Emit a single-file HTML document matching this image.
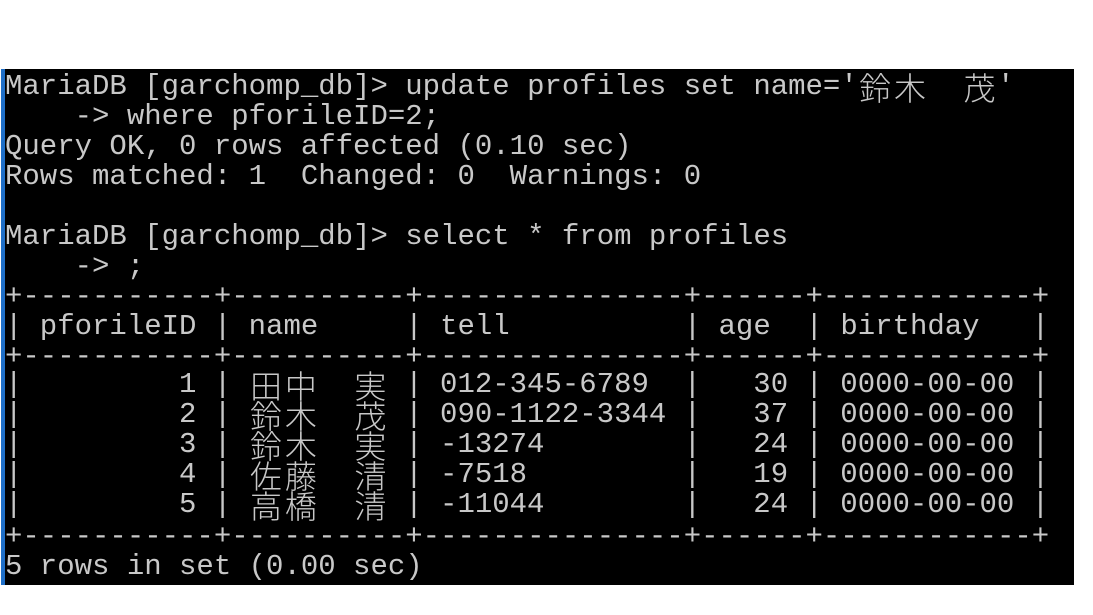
<!DOCTYPE html>
<html><head><meta charset="utf-8"><style>
html,body{margin:0;padding:0;background:#fff;width:1093px;height:615px;overflow:hidden}
#blue{position:absolute;left:1px;top:69px;width:4px;height:516px;background:#1f6fc8}
#term{position:absolute;left:5px;top:69px;width:1069px;height:516px;background:#000}
.l{position:absolute;left:5px;height:30px;line-height:30px;font-family:"Liberation Mono","Noto Sans CJK JP",monospace;font-size:29px;color:#c8c8c8;white-space:pre}
.w{display:inline-block;width:34.8px;text-align:center;font-family:"Noto Sans CJK JP",sans-serif;font-size:32px;font-weight:300;line-height:30px;vertical-align:top}
</style></head><body>
<div id="blue"></div><div id="term"></div>
<div class="l" style="top:72px">MariaDB [garchomp_db]&gt; update profiles set name='<span class="w">鈴</span><span class="w">木</span><span class="w"> </span><span class="w">茂</span>'</div>
<div class="l" style="top:102px">    -&gt; where pforileID=2;</div>
<div class="l" style="top:132px">Query OK, 0 rows affected (0.10 sec)</div>
<div class="l" style="top:162px">Rows matched: 1  Changed: 0  Warnings: 0</div>
<div class="l" style="top:222px">MariaDB [garchomp_db]&gt; select * from profiles</div>
<div class="l" style="top:252px">    -&gt; ;</div>
<div class="l" style="top:282px">+-----------+----------+---------------+------+------------+</div>
<div class="l" style="top:312px">| pforileID | name     | tell          | age  | birthday   |</div>
<div class="l" style="top:342px">+-----------+----------+---------------+------+------------+</div>
<div class="l" style="top:370px">|         1 | <span class="w">田</span><span class="w">中</span><span class="w"> </span><span class="w">実</span> | 012-345-6789  |   30 | 0000-00-00 |</div>
<div class="l" style="top:400px">|         2 | <span class="w">鈴</span><span class="w">木</span><span class="w"> </span><span class="w">茂</span> | 090-1122-3344 |   37 | 0000-00-00 |</div>
<div class="l" style="top:430px">|         3 | <span class="w">鈴</span><span class="w">木</span><span class="w"> </span><span class="w">実</span> | -13274        |   24 | 0000-00-00 |</div>
<div class="l" style="top:460px">|         4 | <span class="w">佐</span><span class="w">藤</span><span class="w"> </span><span class="w">清</span> | -7518         |   19 | 0000-00-00 |</div>
<div class="l" style="top:490px">|         5 | <span class="w">高</span><span class="w">橋</span><span class="w"> </span><span class="w">清</span> | -11044        |   24 | 0000-00-00 |</div>
<div class="l" style="top:522px">+-----------+----------+---------------+------+------------+</div>
<div class="l" style="top:552px">5 rows in set (0.00 sec)</div>
</body></html>
